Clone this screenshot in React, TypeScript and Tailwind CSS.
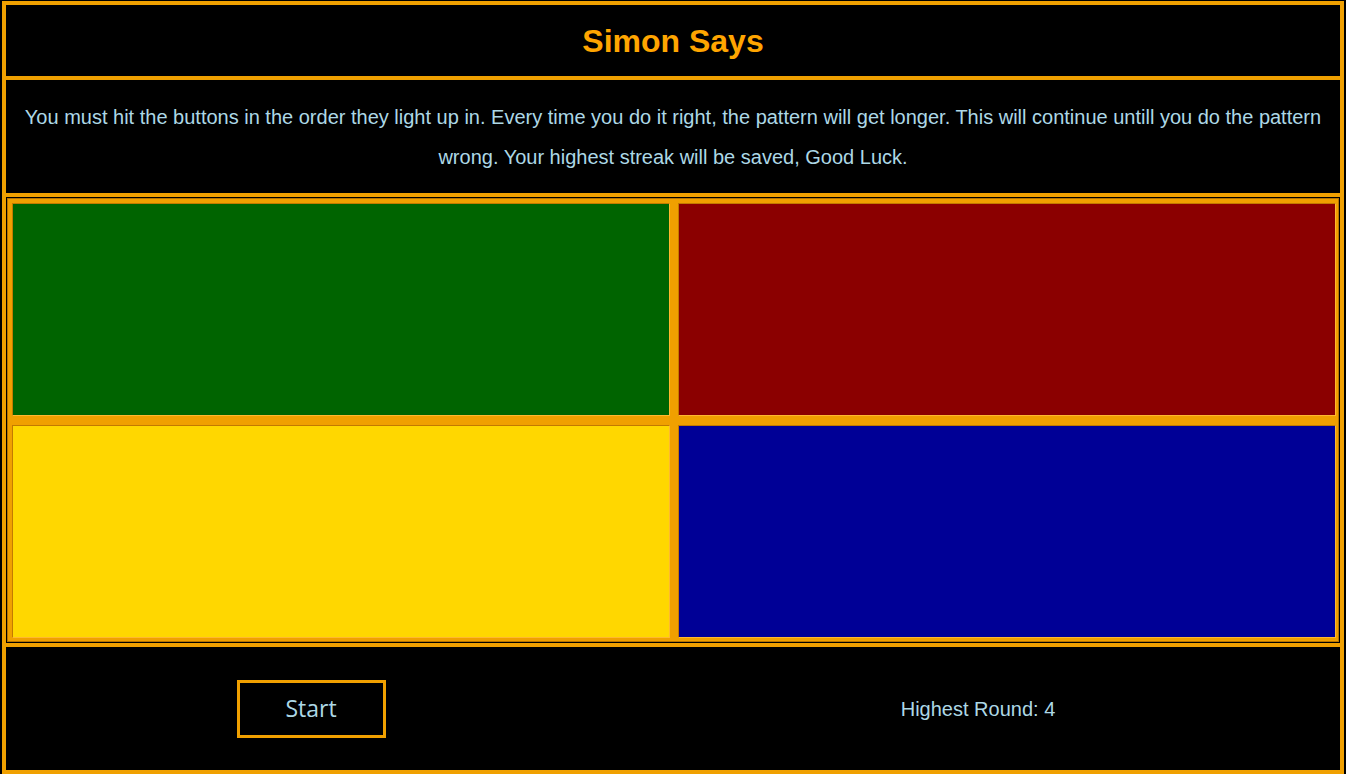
import React from "react";

export default function App() {
  const cell = "border border-t-[#c27a00] border-l-[#c27a00] border-b-[#ffb830] border-r-[#ffb830]";
  return (
    <div className="w-[1346px] h-[774px] bg-black px-[2px] pt-[1px] overflow-hidden" style={{ fontFamily: '"Liberation Sans", Arial, sans-serif' }}>
      <div className="h-[773px] border-4 border-[#f0a000] flex flex-col">
        <div className="h-[75px] flex items-center justify-center border-b-4 border-[#f0a000] shrink-0">
          <h1 className="text-[32px] font-bold text-[#ffa500] leading-none">Simon Says</h1>
        </div>
        <div className="h-[117px] flex items-center justify-center border-b-4 border-[#f0a000] shrink-0 px-[14px]">
          <p className="text-[20px] leading-[40px] text-[#add8e6] text-center">
            You must hit the buttons in the order they light up in. Every time you do it right, the pattern will get longer. This will continue untill you do the pattern wrong. Your highest streak will be saved, Good Luck.
          </p>
        </div>
        <div className="h-[450px] border-b-4 border-[#f0a000] shrink-0 p-[1px]">
          <div className="h-full bg-[#f0a000] border border-[#b87400] pl-[4px] pt-[4px] pr-[2px] pb-[3px] grid grid-cols-2 grid-rows-2 gap-x-[8px] gap-y-[9px]">
            <div className={`bg-[#006400] ${cell}`} />
            <div className={`bg-[#8b0000] ${cell}`} />
            <div className={`bg-[#ffd700] ${cell}`} />
            <div className={`bg-[#000096] ${cell}`} />
          </div>
        </div>
        <div className="flex-1 grid grid-cols-[610px_1fr] items-center">
          <div className="flex justify-center">
            <button className="w-[149px] h-[58px] border-[3px] border-[#f0a000] bg-black text-[#add8e6] text-[23px]" style={{ fontFamily: '"Open Sans", "DejaVu Sans", sans-serif' }}>
              Start
            </button>
          </div>
          <div className="flex justify-center">
            <span className="text-[20px] text-[#add8e6]">Highest Round: 4</span>
          </div>
        </div>
      </div>
    </div>
  );
}
